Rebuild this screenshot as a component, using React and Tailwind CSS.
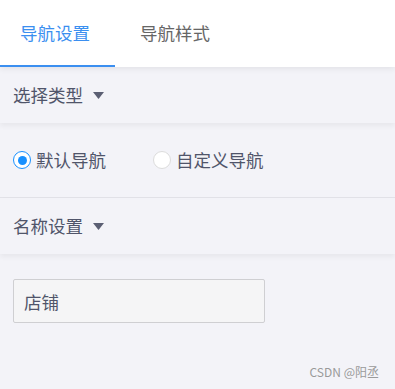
import React, { useState } from "react";

const font = { fontFamily: '"Noto Sans CJK SC", "Noto Sans", sans-serif' };

const Caret = () => (
  <svg width="11" height="8" viewBox="0 0 11 8" className="ml-[10px] mt-[1px]">
    <path d="M0 0 L11 0 L5.5 7 Z" fill="#5b5f73" />
  </svg>
);

const SectionHeader = ({ title }) => (
  <div className="relative z-10 flex h-[56px] items-center bg-[#f3f3f8] pl-[13px] text-[17.5px] text-[#50556a] shadow-[0_3px_5px_rgba(0,0,0,0.05)]">
    <span>{title}</span>
    <Caret />
  </div>
);

const Radio = ({ checked, label, onClick }) => (
  <button onClick={onClick} className="flex items-center gap-[5px] text-[17.5px] text-[#50556a]">
    <span
      className={`flex h-[18px] w-[18px] items-center justify-center rounded-full border bg-white ${
        checked ? "border-[#1890ff]" : "border-[#dcdcdc]"
      }`}
    >
      {checked && <span className="h-[9px] w-[9px] rounded-full bg-[#1890ff]" />}
    </span>
    <span>{label}</span>
  </button>
);

export default function App() {
  const [tab, setTab] = useState(0);
  const [type, setType] = useState(0);

  return (
    <div style={font} className="relative h-[389px] w-[395px] overflow-hidden bg-[#f3f3f8]">
      <div className="relative z-20 flex h-[67px] bg-white shadow-[0_2px_6px_rgba(0,0,0,0.07)]">
        {["导航设置", "导航样式"].map((t, i) => (
          <button
            key={t}
            onClick={() => setTab(i)}
            className={`flex h-full w-[115px] items-center pt-[1px] text-[17.5px] ${
              i === 0 ? "pl-[20px]" : "pl-[25px]"
            } ${tab === i ? "border-b-2 border-[#3b8ff0] text-[#3b8ff0]" : "border-b-2 border-transparent text-[#666]"}`}
          >
            {t}
          </button>
        ))}
      </div>

      <SectionHeader title="选择类型" />

      <div className="flex h-[75px] items-center gap-[47px] border-b border-[#e2e2e8] pl-[13px]">
        <Radio checked={type === 0} label="默认导航" onClick={() => setType(0)} />
        <Radio checked={type === 1} label="自定义导航" onClick={() => setType(1)} />
      </div>

      <SectionHeader title="名称设置" />

      <div className="px-[13px] pt-[25px]">
        <input
          defaultValue="店铺"
          className="h-[44px] w-[252px] rounded-[2px] border border-[#cfcfd2] bg-[#f5f5f6] px-[10px] text-[17.5px] text-[#50556a] outline-none"
        />
      </div>

      <div className="absolute bottom-[8px] right-[16px] text-[12px] text-[#9a9a9a]">CSDN @阳丞</div>
    </div>
  );
}
